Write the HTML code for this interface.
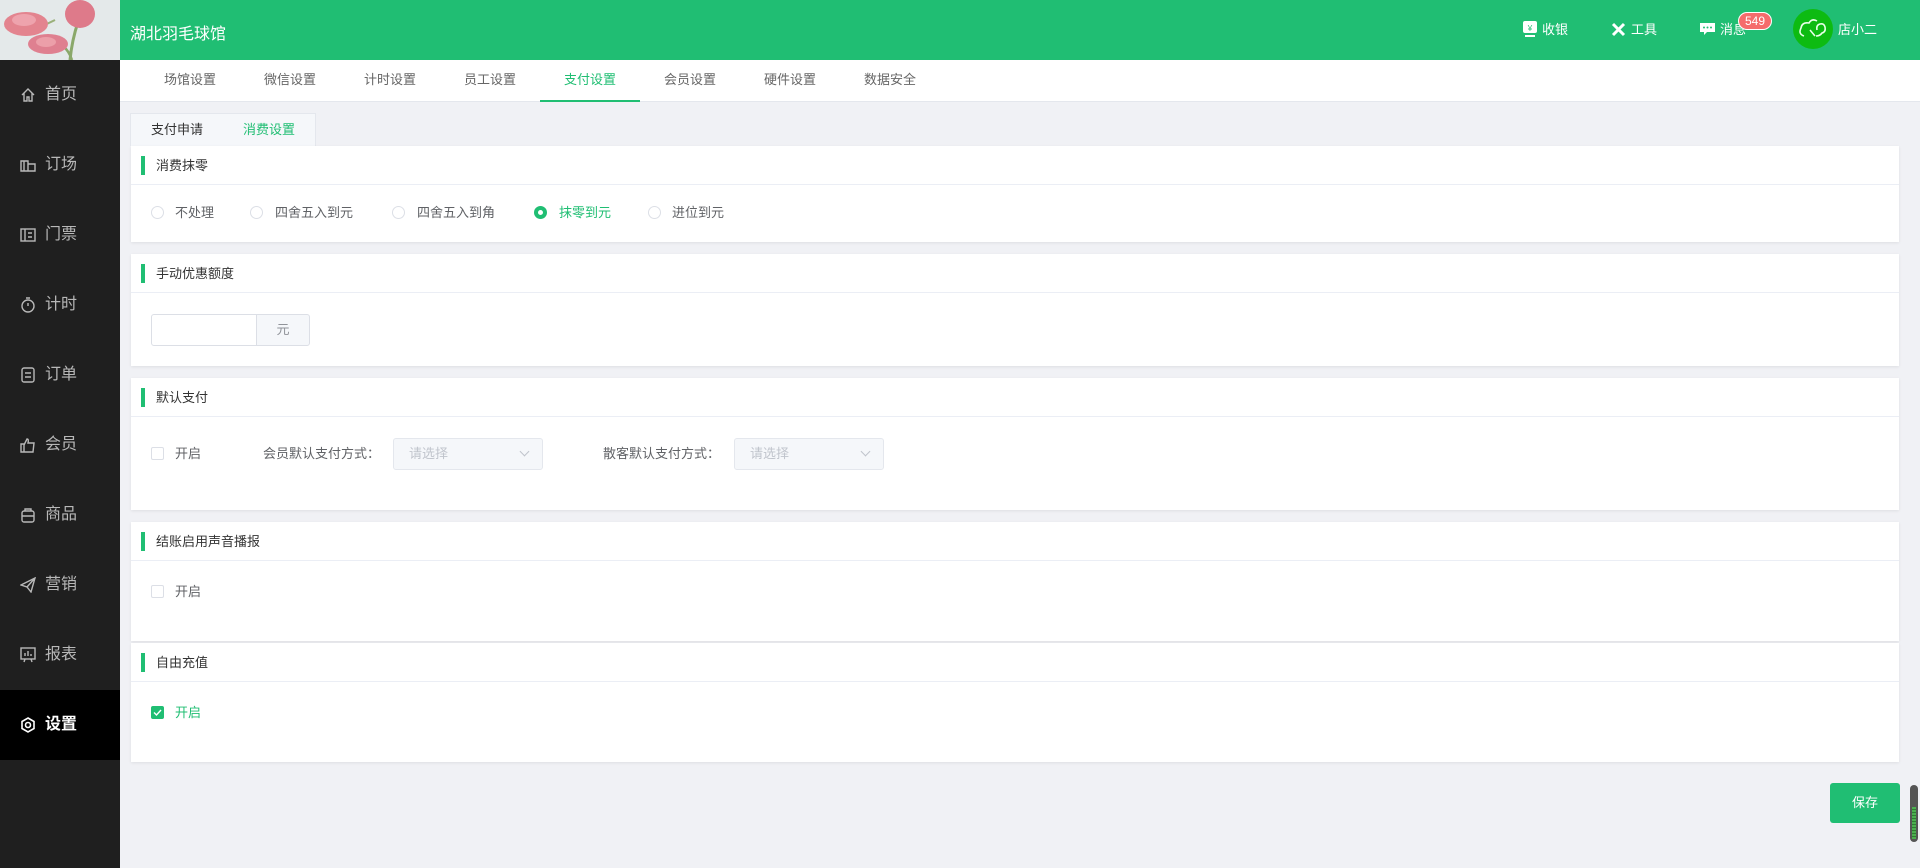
<!DOCTYPE html>
<html><head><meta charset="utf-8"><style>
*{margin:0;padding:0;box-sizing:border-box}
body{width:1920px;height:868px;overflow:hidden;background:#f0f1f5;font-family:"Liberation Sans","Noto Sans CJK SC",sans-serif;font-size:13px;color:#333;position:relative}
.abs{position:absolute}
#hdr{left:0;top:0;width:1920px;height:60px;background:#20be73}
#logo{left:0;top:0;width:120px;height:60px;overflow:hidden}
#side{left:0;top:60px;width:120px;height:808px;background:#1f1f1f}
.nav{position:absolute;left:0;width:120px;height:70px;color:#b8b8b8;font-size:16px;line-height:70px;padding-left:45px}
.nav svg{position:absolute;left:20px;top:27px}
.nav.on{background:#000;color:#fff;font-weight:bold}
#tabs{left:120px;top:60px;width:1800px;height:42px;background:#fff;border-bottom:1px solid #e4e7ed}
.tab{position:absolute;top:0;width:100px;text-align:center;line-height:40px;color:#666;font-size:13px}
.tab.on{color:#20be73;border-bottom:2px solid #20be73;height:42px}
.card{position:absolute;left:131px;width:1768px;background:#fff;box-shadow:0 1px 3px rgba(0,0,0,.08)}
.ct{height:39px;border-bottom:1px solid #ebeef5;line-height:39px;padding-left:25px;position:relative;font-size:13px;color:#333}
.ct:before{content:"";position:absolute;left:10px;top:10px;width:4px;height:19px;background:#20be73}
.radio{position:absolute;width:13px;height:13px;border:1px solid #dcdfe6;border-radius:50%}
.radio.on{border:4px solid #20be73}
.cb{position:absolute;width:13px;height:13px;border:1px solid #dcdfe6;border-radius:2px}
.lbl{position:absolute;font-size:13px;color:#606266;line-height:16px}
.sel{position:absolute;height:32px;width:150px;background:#f5f7fa;border:1px solid #e4e7ed;border-radius:3px;color:#c0c4cc;line-height:30px;padding-left:15px}
.sel:after{content:"";position:absolute;right:14px;top:9px;width:6px;height:6px;border-right:1px solid #c0c4cc;border-bottom:1px solid #c0c4cc;transform:rotate(45deg)}
.hi{position:absolute;top:0;line-height:60px;color:#fff;font-size:13px}
</style></head><body>
<div id="hdr" class="abs"></div>
<div id="logo" class="abs">
<svg width="120" height="60"><rect width="120" height="60" fill="#e4e9ea"/>
<path d="M78 22 Q72 40 70 60" stroke="#8aa86a" stroke-width="3" fill="none"/>
<path d="M48 40 Q66 42 72 60" stroke="#8aa86a" stroke-width="2.5" fill="none"/>
<path d="M25 30 Q40 28 55 20" stroke="#9ab07a" stroke-width="2" fill="none"/>
<ellipse cx="26" cy="24" rx="22" ry="12" fill="#e3848f"/>
<ellipse cx="24" cy="20" rx="12" ry="6" fill="#eea3ad"/>
<ellipse cx="80" cy="14" rx="15" ry="14" fill="#de7a8a"/>
<ellipse cx="48" cy="44" rx="20" ry="10" fill="#df8090"/>
<ellipse cx="46" cy="42" rx="10" ry="5" fill="#ec9fa9"/>
</svg></div>
<div class="abs" style="left:130px;top:20px;color:#fff;font-size:16px">湖北羽毛球馆</div>

<svg class="abs" style="left:1522px;top:21px" width="16" height="17"><rect x="1" y="0" width="14" height="12" rx="2" fill="#fff"/><rect x="3" y="14" width="10" height="2" fill="#fff"/><text x="8" y="10" font-size="8" text-anchor="middle" fill="#20be73">¥</text></svg>
<div class="hi" style="left:1542px">收银</div>
<svg class="abs" style="left:1611px;top:22px" width="15" height="15"><path d="M2 2 L13 13 M13 2 L2 13" stroke="#fff" stroke-width="3"/></svg>
<div class="hi" style="left:1631px">工具</div>
<svg class="abs" style="left:1699px;top:22px" width="17" height="14"><path d="M1 1 H16 V10 H8 L5 13 V10 H1 Z" fill="#fff"/><circle cx="5" cy="5.5" r="1" fill="#20be73"/><circle cx="8.5" cy="5.5" r="1" fill="#20be73"/><circle cx="12" cy="5.5" r="1" fill="#20be73"/></svg>
<div class="hi" style="left:1720px">消息</div>
<div class="abs" style="left:1738px;top:12px;width:34px;height:18px;background:#f56c6c;border:1px solid #fff;border-radius:9px;color:#fff;font-size:12px;line-height:16px;text-align:center">549</div>
<svg class="abs" style="left:1793px;top:9px" width="40" height="40"><circle cx="20" cy="20" r="20" fill="#0dbb12"/><path d="M11 27 Q5 25 8 19 Q9 13 16 14 Q19 9 24 12 M22 27 L17 21 M23 27 Q27 27 29 24 Q33 23 32 18 Q31 14 27 15 Q23 16 24 21" stroke="#e8ffe8" stroke-width="1.6" fill="none"/></svg>
<div class="hi" style="left:1838px">店小二</div>

<div id="side" class="abs">
<div class="nav" style="top:0"><svg width="16" height="16"><path d="M2 8 L8 2 L14 8 M4 6 V14 H7 V10 H9 V14 H12 V6" stroke="#b8b8b8" stroke-width="1.4" fill="none"/></svg>首页</div>
<div class="nav" style="top:70px"><svg width="16" height="16"><path d="M1 4 H8 V14 H1 Z M8 7 H15 V14 H8 M4 4 V14" stroke="#b8b8b8" stroke-width="1.4" fill="none"/></svg>订场</div>
<div class="nav" style="top:140px"><svg width="16" height="16"><rect x="1" y="2" width="14" height="12" stroke="#b8b8b8" stroke-width="1.4" fill="none"/><path d="M5 2 V14 M8 6 H12 M8 10 H12" stroke="#b8b8b8" stroke-width="1.4"/></svg>门票</div>
<div class="nav" style="top:210px"><svg width="16" height="16"><circle cx="8" cy="9" r="6" stroke="#b8b8b8" stroke-width="1.4" fill="none"/><path d="M6 1 H10 M8 6 V9" stroke="#b8b8b8" stroke-width="1.4"/></svg>计时</div>
<div class="nav" style="top:280px"><svg width="16" height="16"><rect x="2" y="1" width="12" height="14" rx="2" stroke="#b8b8b8" stroke-width="1.4" fill="none"/><path d="M5 6 H11 M5 10 H11" stroke="#b8b8b8" stroke-width="1.4"/></svg>订单</div>
<div class="nav" style="top:350px"><svg width="16" height="16"><path d="M1 7 H4 V15 H1 Z M4 8 L7 2 Q9 2 8 6 H14 L13 15 H4" stroke="#b8b8b8" stroke-width="1.4" fill="none"/></svg>会员</div>
<div class="nav" style="top:420px"><svg width="16" height="16"><rect x="2" y="4" width="12" height="11" rx="2" stroke="#b8b8b8" stroke-width="1.4" fill="none"/><path d="M5 4 V2 H11 V4 M2 9 H14" stroke="#b8b8b8" stroke-width="1.4" fill="none"/></svg>商品</div>
<div class="nav" style="top:490px"><svg width="16" height="16"><path d="M1 8 L15 1 L11 15 L7 10 Z M7 10 L15 1" stroke="#b8b8b8" stroke-width="1.4" fill="none"/></svg>营销</div>
<div class="nav" style="top:560px"><svg width="16" height="16"><rect x="1" y="1" width="14" height="11" stroke="#b8b8b8" stroke-width="1.4" fill="none"/><path d="M5 12 L4 15 M11 12 L12 15 M5 9 V6 M8 9 V4 M11 9 V7" stroke="#b8b8b8" stroke-width="1.4"/></svg>报表</div>
<div class="nav on" style="top:630px"><svg width="16" height="16"><path d="M8 1 L14 4.5 V11.5 L8 15 L2 11.5 V4.5 Z" stroke="#fff" stroke-width="1.6" fill="none"/><circle cx="8" cy="8" r="2.5" stroke="#fff" stroke-width="1.6" fill="none"/></svg>设置</div>
</div>

<div id="tabs" class="abs">
<div class="tab" style="left:20px">场馆设置</div>
<div class="tab" style="left:120px">微信设置</div>
<div class="tab" style="left:220px">计时设置</div>
<div class="tab" style="left:320px">员工设置</div>
<div class="tab on" style="left:420px">支付设置</div>
<div class="tab" style="left:520px">会员设置</div>
<div class="tab" style="left:620px">硬件设置</div>
<div class="tab" style="left:720px">数据安全</div>
</div>

<div class="abs" style="left:130px;top:113px;width:94px;height:33px;background:#f5f7fa;border:1px solid #e4e7ed;border-bottom:none;line-height:32px;text-align:center;color:#333">支付申请</div>
<div class="abs" style="left:223px;top:113px;width:93px;height:33px;background:#f5f7fa;border:1px solid #e4e7ed;border-left:none;border-bottom:none;line-height:32px;text-align:center;color:#20be73">消费设置</div>

<div class="card" style="top:146px;height:96px"><div class="ct">消费抹零</div>
<div class="radio" style="left:20px;top:60px"></div><div class="lbl" style="left:44px;top:59px">不处理</div>
<div class="radio" style="left:119px;top:60px"></div><div class="lbl" style="left:144px;top:59px">四舍五入到元</div>
<div class="radio" style="left:261px;top:60px"></div><div class="lbl" style="left:286px;top:59px">四舍五入到角</div>
<div class="radio on" style="left:403px;top:60px"></div><div class="lbl" style="left:428px;top:59px;color:#20be73">抹零到元</div>
<div class="radio" style="left:517px;top:60px"></div><div class="lbl" style="left:541px;top:59px">进位到元</div>
</div>

<div class="card" style="top:254px;height:112px"><div class="ct">手动优惠额度</div>
<div class="abs" style="left:20px;top:60px;width:106px;height:32px;border:1px solid #dcdfe6;border-radius:3px 0 0 3px"></div>
<div class="abs" style="left:125px;top:60px;width:54px;height:32px;border:1px solid #dcdfe6;background:#f5f7fa;border-radius:0 3px 3px 0;text-align:center;line-height:30px;color:#909399">元</div>
</div>

<div class="card" style="top:378px;height:132px"><div class="ct">默认支付</div>
<div class="cb" style="left:20px;top:69px"></div><div class="lbl" style="left:44px;top:68px">开启</div>
<div class="lbl" style="left:132px;top:68px">会员默认支付方式：</div>
<div class="sel" style="left:262px;top:60px">请选择</div>
<div class="lbl" style="left:472px;top:68px">散客默认支付方式：</div>
<div class="sel" style="left:603px;top:60px">请选择</div>
</div>

<div class="card" style="top:522px;height:119px"><div class="ct">结账启用声音播报</div>
<div class="cb" style="left:20px;top:63px"></div><div class="lbl" style="left:44px;top:62px">开启</div>
</div>

<div class="card" style="top:643px;height:119px"><div class="ct">自由充值</div>
<div class="cb" style="left:20px;top:63px;background:#20be73;border-color:#20be73"><svg width="11" height="11" style="position:absolute;left:0;top:0"><path d="M2 5.5 L4.5 8 L9 3" stroke="#fff" stroke-width="1.4" fill="none"/></svg></div><div class="lbl" style="left:44px;top:62px;color:#20be73">开启</div>
</div>

<div class="abs" style="left:1830px;top:783px;width:70px;height:40px;background:#20be73;border-radius:3px;color:#fff;text-align:center;line-height:40px;font-size:13px">保存</div>
<div class="abs" style="left:1910px;top:785px;width:8px;height:57px;background:#555;border-radius:4px"><div style="position:absolute;left:2px;top:22px;width:4px;height:32px;background:repeating-linear-gradient(#4caf50 0 2px,#2e7d32 2px 3px)"></div></div>
</body></html>
